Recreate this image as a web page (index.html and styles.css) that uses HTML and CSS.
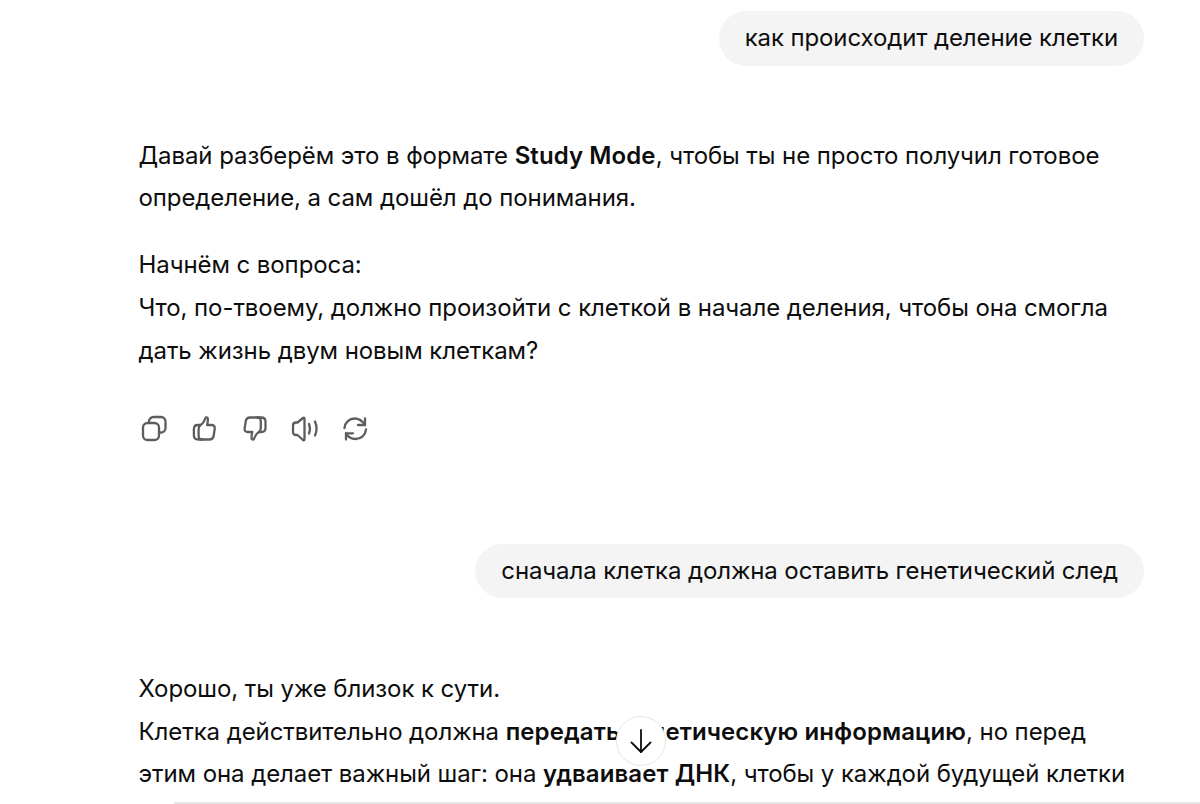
FILE: index.html
```html
<!DOCTYPE html>
<html lang="ru">

<head>
  <meta charset="UTF-8">
  <title>Study Mode</title>
  <link rel="stylesheet" href="styles.css">
</head>

<body>
  <main class="chat">
    <div class="user-row">
      <div class="bubble">как происходит деление клетки</div>
    </div>

    <div class="answer">
      <p>Давай разберём это в формате <strong>Study Mode</strong>, чтобы ты не просто получил готовое определение, а сам дошёл до понимания.</p>
      <p>Начнём с вопроса:<br>Что, по-твоему, должно произойти с клеткой в начале деления, чтобы она смогла дать жизнь двум новым клеткам?</p>
    </div>

    <div class="actions">
      <svg class="icon" viewBox="0 0 28 28">
        <rect x="3" y="8" width="16" height="17" rx="4.5"/>
        <path d="M9 8V6.500A4.500 4.500 0 0 1 13.500 2H21a4.500 4.500 0 0 1 4.500 4.500V13a4.500 4.500 0 0 1-4.500 4.500H19"/>
      </svg>
      <svg class="icon" viewBox="0 0 28 28">
        <g transform="rotate(180 14.700 13.500)">
          <path d="M19 17c-2 1-4 4-5 7-.3 1-2.500.8-2.500-1 0-2 .3-4 .8-6H8c-2.500 0-3.800-1.500-3.300-3.800l1-6.700C6.200 3.500 7.500 2.500 10 2.500h9"/>
          <path d="M17 2.500h4c2.800 0 4.500 1.500 4.500 4V13c0 2.500-1.800 4-4 4H19c1.200-1 1.800-2.200 1.800-4V6c0-1.800-1.500-3.500-3.800-3.500z"/>
        </g>
      </svg>
      <svg class="icon" viewBox="0 0 28 28">
        <path d="M19 17c-2 1-4 4-5 7-.3 1-2.500.8-2.500-1 0-2 .3-4 .8-6H8c-2.500 0-3.800-1.500-3.300-3.800l1-6.700C6.200 3.500 7.500 2.500 10 2.500h9"/>
        <path d="M17 2.500h4c2.800 0 4.500 1.500 4.500 4V13c0 2.500-1.800 4-4 4H19c1.200-1 1.800-2.200 1.800-4V6c0-1.800-1.500-3.500-3.800-3.500z"/>
      </svg>
      <svg class="icon" viewBox="0 0 28 28">
        <path d="M6 7.500h1.500L13 3c.8-.6 1.500-.3 1.500.8v20.400c0 1.100-.7 1.400-1.500.8L7.500 20H6c-2 0-3-1.300-3-3v-6.500c0-1.700 1-3 3-3z"/>
        <path d="M19 9c1.200 3 1.200 6.500 0 9.500"/>
        <path d="M25 6.500c2 4.500 2 9.500 0 14"/>
      </svg>
      <svg class="icon" viewBox="0 0 28 28">
        <path d="M4.500 13C5 7.500 9.500 3.500 14.500 3.500c4.500 0 8 2.500 10.500 6.500"/>
        <path d="M25 3.500V10h-7"/>
        <path d="M26 14.500c-.5 5.500-5 9.500-10.500 9.500-4.500 0-7.500-2-9.500-5.700"/>
        <path d="M6 24.500v-6.200h7"/>
      </svg>
    </div>

    <div class="user-row second">
      <div class="bubble">сначала клетка должна оставить генетический след</div>
    </div>

    <div class="answer last">
      <p>Хорошо, ты уже близок к сути.<br>Клетка действительно должна <strong>передать генетическую информацию</strong>, но перед этим она делает важный шаг: она <strong>удваивает ДНК</strong>, чтобы у каждой будущей клетки</p>
    </div>
  </main>

  <button class="scroll-down" type="button" aria-label="Вниз">
    <svg viewBox="0 0 24 24">
      <path d="M12 1v22"/>
      <path d="M2.500 13.500 12 23l9.500-9.500"/>
    </svg>
  </button>
  <div class="composer-edge"></div>
</body>

</html>
```

FILE: styles.css
```css
html,
body {
  height: 100%;
  overflow: hidden;
}

body {
  margin: 0;
  background-color: #fff;
  color: #0d0d0d;
  font-family: Inter, 'Liberation Sans', sans-serif;
  font-size: 24px;
  line-height: 42.6px;
  letter-spacing: -0.08px;
}

.chat {
  padding: 11px 56px 0 138.5px;
}

.user-row {
  display: flex;
  justify-content: flex-end;
}

.user-row.second {
  margin-top: 101px;
}

.bubble {
  padding: 6px 26px;
  background-color: #f4f4f4;
  border-radius: 28px;
  letter-spacing: -0.11px;
}

.answer {
  margin-top: 69px;
}

.answer.last {
  margin-top: 69.5px;
}

.answer p {
  margin: 0 0 24.7px;
}

.answer strong {
  font-weight: 600;
  letter-spacing: 0.1px;
}

.actions {
  display: flex;
  gap: 22px;
  margin-top: 42.6px;
  padding-left: 1.5px;
}

.icon {
  width: 28px;
  height: 28px;
  fill: none;
  stroke: #5d5d5d;
  stroke-width: 2.300;
  stroke-linecap: round;
  stroke-linejoin: round;
}

.scroll-down {
  position: absolute;
  left: 616px;
  top: 716px;
  display: flex;
  align-items: center;
  justify-content: center;
  width: 50px;
  height: 50px;
  padding: 0;
  background-color: #fff;
  border: 1px solid #e6e6e6;
  border-radius: 50%;
}

.scroll-down svg {
  width: 24px;
  height: 24px;
  fill: none;
  stroke: #0d0d0d;
  stroke-width: 1.800;
  stroke-linecap: round;
  stroke-linejoin: round;
}

.composer-edge {
  position: absolute;
  left: 174px;
  right: 0;
  top: 802px;
  height: 2px;
  background-color: #e5e5e5;
}
```
